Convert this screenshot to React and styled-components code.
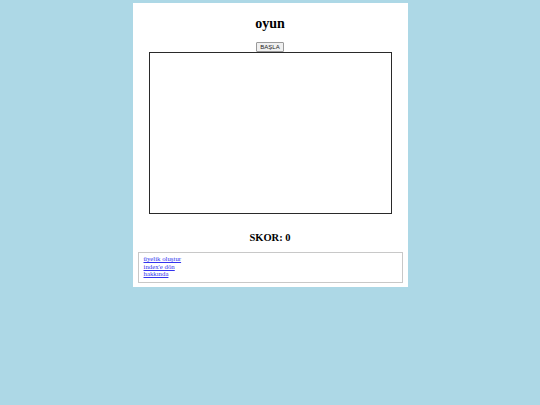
import styled, { createGlobalStyle } from 'styled-components'

const GlobalStyle = createGlobalStyle`
  html, body {
    margin: 0;
    padding: 0;
    background: #add8e6;
  }
  body {
    font-family: "Liberation Serif", "Times New Roman", serif;
  }
`

const Page = styled.div`
  width: 275px;
  margin: 3px auto 0;
  background: #fff;
  padding: 12px 0 4px;
  display: flex;
  flex-direction: column;
  align-items: center;
  box-sizing: border-box;
`

const Title = styled.h1`
  margin: 0;
  font-size: 14px;
  line-height: 18px;
  font-weight: bold;
  color: #000;
`

const StartButton = styled.button`
  margin-top: 9px;
  height: 10px;
  padding: 0 3px;
  font-family: "Liberation Sans", Arial, sans-serif;
  font-size: 6px;
  font-weight: normal;
  line-height: 8px;
  color: #222;
  background: #f0f0f0;
  border: 1px solid #9a9a9a;
  border-radius: 1px;
  display: flex;
  align-items: center;
`

const Board = styled.div`
  margin-left: 1px;
  width: 243px;
  height: 162px;
  border: 1px solid #2a2a2a;
  box-sizing: border-box;
  background: #fff;
`

const Score = styled.h2`
  margin: 17px 0 0;
  font-size: 10.5px;
  line-height: 14px;
  font-weight: bold;
  color: #000;
`

const LinkBox = styled.div`
  align-self: stretch;
  margin: 7px 5px 0;
  height: 31px;
  padding: 2px 5px;
  border: 1px solid #c8c8c8;
  box-sizing: border-box;
  display: flex;
  flex-direction: column;
`

const NavLink = styled.a`
  font-size: 6.8px;
  line-height: 7.5px;
  color: #3333ee;
  text-decoration: underline;
`

export default function App() {
  return (
    <>
      <GlobalStyle />
      <Page>
        <Title>oyun</Title>
        <StartButton>BAŞLA</StartButton>
        <Board />
        <Score>SKOR: 0</Score>
        <LinkBox>
          <NavLink href="#">üyelik oluştur</NavLink>
          <NavLink href="#">index'e dön</NavLink>
          <NavLink href="#">hakkında</NavLink>
        </LinkBox>
      </Page>
    </>
  )
}
